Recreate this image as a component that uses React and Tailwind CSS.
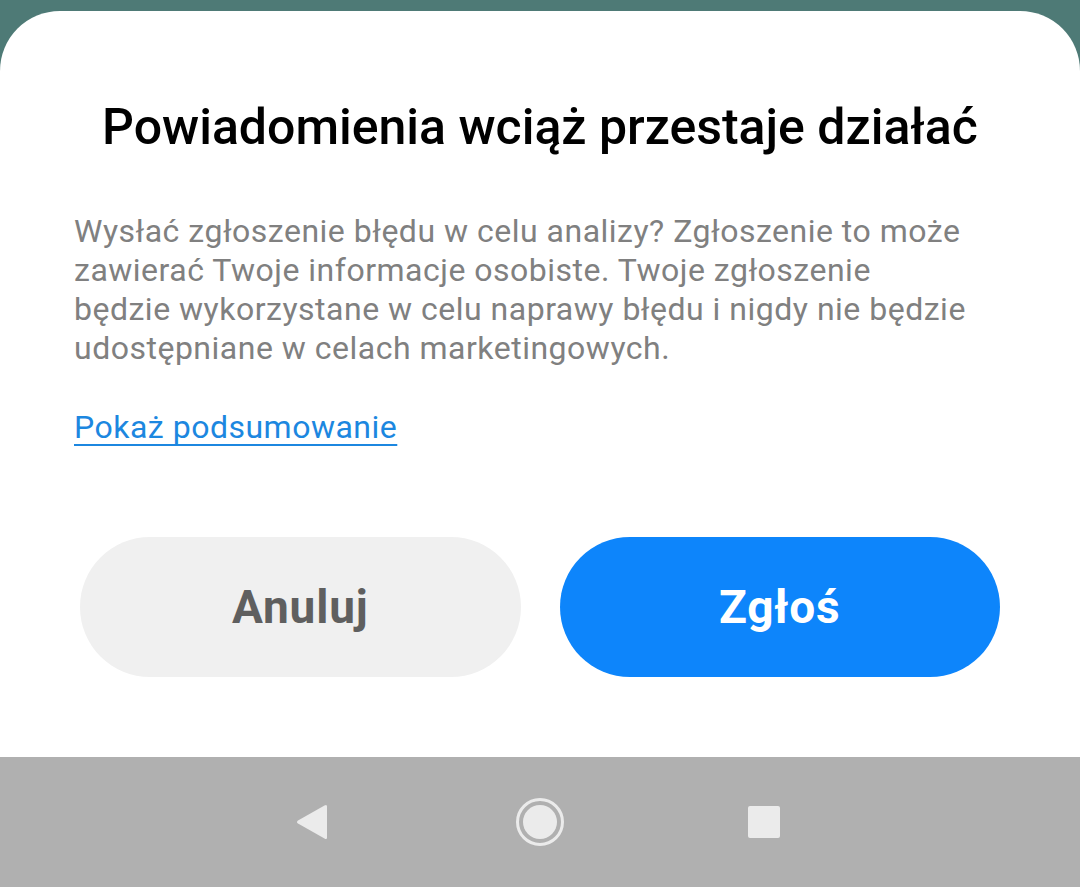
import React from 'react';

export default function App() {
  return (
    <div className="h-[887px] w-[1080px] bg-[#4e7a76] flex flex-col overflow-hidden" style={{ fontFamily: 'Roboto, "Noto Sans", sans-serif' }}>
      {/* Top strip behind the sheet */}
      <div className="h-[11px] shrink-0" />

      {/* Dialog sheet */}
      <div className="flex-1 bg-white rounded-t-[60px] flex flex-col pt-[87px]">
        <h1 className="text-center text-[50px] leading-[59px] font-medium text-black">
          Powiadomienia wciąż przestaje działać
        </h1>

        <p className="mt-[55px] ml-[74px] w-[900px] text-[32px] leading-[39px] tracking-[0.5px] text-[#808080]">
          Wysłać zgłoszenie błędu w celu analizy? Zgłoszenie to może zawierać Twoje informacje osobiste. Twoje zgłoszenie będzie wykorzystane w celu naprawy błędu i nigdy nie będzie udostępniane w celach marketingowych.
        </p>

        <div className="mt-[40px] ml-[74px] text-[32px] leading-[39px] tracking-[0.5px]">
          <a href="#" className="text-[#1c87e0] underline underline-offset-[6px] decoration-[2px]">
            Pokaż podsumowanie
          </a>
        </div>

        <div className="mt-[90px] px-[80px] grid grid-cols-2 gap-[39px]">
          <button className="h-[140px] rounded-full bg-[#f0f0f0] text-[#5f5f5f] text-[46px] tracking-[0.8px] font-bold">
            Anuluj
          </button>
          <button className="h-[140px] rounded-full bg-[#0d85fb] text-white text-[46px] tracking-[0.8px] font-bold">
            Zgłoś
          </button>
        </div>
      </div>

      {/* Navigation bar */}
      <div className="h-[130px] shrink-0 bg-[#b0b0b0] flex items-center pl-[294px]">
        <svg width="36" height="38" viewBox="0 0 36 38">
          <path d="M33 3.5 L33 34.5 Q33 37 30.5 35.6 L4 20.6 Q2 19 4 17.4 L30.5 2.4 Q33 1 33 3.5 Z" fill="#ebebeb" />
        </svg>
        <svg className="ml-[185px]" width="50" height="50" viewBox="0 0 50 50">
          <circle cx="25" cy="25" r="22.5" fill="none" stroke="#ebebeb" strokeWidth="3" />
          <circle cx="25" cy="25" r="17" fill="#ebebeb" />
        </svg>
        <svg className="ml-[182px]" width="34" height="34" viewBox="0 0 34 34">
          <rect x="1" y="1" width="32" height="32" rx="2" fill="#ebebeb" />
        </svg>
      </div>
    </div>
  );
}
